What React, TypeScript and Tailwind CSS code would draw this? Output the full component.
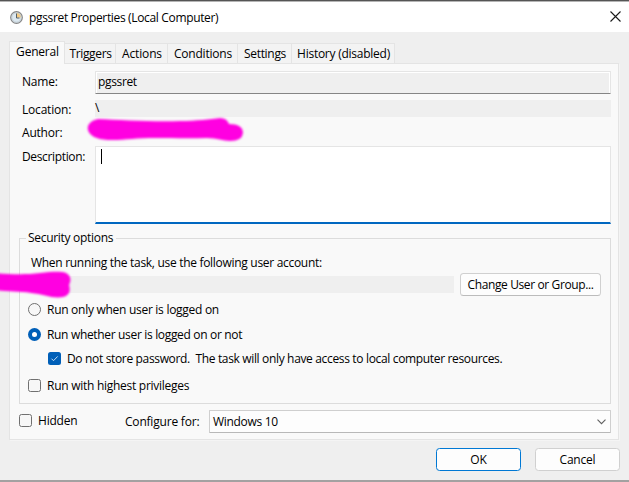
import type { ReactNode } from "react";

function Check({ checked = false }: { checked?: boolean }) {
  return checked ? (
    <span className="flex size-[13px] shrink-0 items-center justify-center rounded-[2.5px] bg-[#005fb8]">
      <svg width="13" height="13" viewBox="0 0 13 13" fill="none">
        <path d="M3.5 6.7L5.5 8.7L9.7 4.4" stroke="#d8e8f5" strokeWidth="0.9" />
      </svg>
    </span>
  ) : (
    <span className="size-[13px] shrink-0 rounded-[2.5px] border border-[#707070] bg-[#f7f7f7]" />
  );
}

function Radio({ checked = false }: { checked?: boolean }) {
  return checked ? (
    <span className="flex size-[13px] shrink-0 items-center justify-center rounded-full bg-[#005fb8]">
      <span className="size-[5px] rounded-full bg-white" />
    </span>
  ) : (
    <span className="size-[13px] shrink-0 rounded-full border border-[#707070] bg-[#f7f7f7]" />
  );
}

function Button({ children, className }: { children: ReactNode; className: string }) {
  return (
    <button className={`flex h-[23px] shrink-0 items-center justify-center rounded-[3.5px] border bg-[#fdfdfd] pt-px ${className}`}>
      {children}
    </button>
  );
}

const tabs = [
  { name: "Triggers", style: "w-[51px] tracking-[-0.35px]" },
  { name: "Actions", style: "w-[52px] tracking-[-0.15px]" },
  { name: "Conditions", style: "w-[70px] tracking-[-0.2px]" },
  { name: "Settings", style: "w-[54px] tracking-[-0.3px]" },
  { name: "History (disabled)", style: "w-[103px] tracking-[-0.25px]" },
];

export default function App() {
  return (
    <div className="relative flex h-[482px] w-[629px] flex-col overflow-hidden border-t border-b-2 border-t-[#555555] border-b-[#a3a1a1] bg-[#efefef] font-['Open_Sans','Noto_Sans',sans-serif] text-[12px] leading-4 tracking-[-0.2px] whitespace-pre text-black">
      <header className="flex h-[31px] shrink-0 items-center border-t border-[#b4b4b4] bg-white pl-[10px] pr-[8px]">
        <svg width="13" height="13" viewBox="0 0 13 13" fill="none">
          <circle cx="6.5" cy="6.5" r="5.8" fill="#dce8f0" stroke="#858585" strokeWidth="1.2" />
          <path d="M6.5 6.5V1.8A4.7 4.7 0 0 1 11.2 6.5Z" fill="#f5cb83" />
          <circle cx="6.5" cy="6.5" r="4.6" stroke="#b9c4cb" strokeWidth="0.6" />
          <path d="M6.5 2.5V7H9.5" stroke="#535e66" strokeWidth="1" />
        </svg>
        <span className="ml-[6px] pt-px tracking-[-0.34px]">pgssret Properties (Local Computer)</span>
        <svg className="mb-px ml-auto" width="11" height="11" viewBox="0 0 11 11" fill="none">
          <path d="M.5.5L10.5 10.5M10.5.5L.5 10.5" stroke="#191919" strokeWidth="1.1" />
        </svg>
      </header>

      <nav className="flex h-[31px] shrink-0 items-end pl-[9px]">
        <div className="z-10 -mb-px flex h-[23px] w-[56px] justify-center border border-b-0 border-[#e4e4e4] bg-[#f9f9f9] pl-px pt-[2px]">General</div>
        {tabs.map((tab) => (
          <div key={tab.name} className={`flex h-5 justify-center border-t border-r border-[#e4e4e4] bg-[#f3f3f3] pl-px pt-[2px] ${tab.style}`}>
            {tab.name}
          </div>
        ))}
      </nav>

      <main className="ml-[9px] flex h-[377px] w-[610px] shrink-0 flex-col border border-[#e4e4e4] bg-[#f9f9f9] pr-[7px] shadow-[1px_1px_0_#f4f4f4]">
        <div className="mt-[7px] flex h-[23px] items-start">
          <span className="w-[85px] pl-3 pt-[3px]">Name:</span>
          <div className="h-[23px] grow rounded-[1px] border border-[#e5e5e5] border-b-[#858585] bg-white p-px pb-0">
            <div className="h-5 bg-[#efefef] pl-px pt-px tracking-[-0.35px]">pgssret</div>
          </div>
        </div>
        <div className="mt-[6px] flex h-[17px]">
          <span className="w-[85px] pl-3 pt-[2px]">Location:</span>
          <div className="grow bg-[#efefef]">\</div>
        </div>
        <div className="mt-2 h-[15px] pl-3">Author:</div>
        <div className="mt-[6px] flex h-[78px]">
          <span className="w-[85px] pl-3 pt-[3px] tracking-[-0.35px]">Description:</span>
          <div className="grow border border-b-2 border-[#e5e5e5] border-b-[#0067c0] bg-white pl-[5px] pt-[2px]">
            <div className="h-[15px] w-px bg-black" />
          </div>
        </div>

        <section className="ml-[9px] mt-[14px] h-[166px] border border-[#dcdcdc]">
          <h2 className="-mt-[9px] ml-[6px] w-[90px] bg-[#f9f9f9] pl-[2px] tracking-[-0.3px]">Security options</h2>
          <p className="ml-[11px] mt-[9px] tracking-[-0.3px]">When running the task, use the following user account:</p>
          <div className="mt-[2px] flex h-[23px] items-center pl-[11px] pr-[9px]">
            <div className="h-[17px] grow bg-[#efefef]" />
            <Button className="ml-[6px] w-[141px] border-[#d0d0d0] border-b-[#bcbcbc] tracking-[-0.38px]">Change User or Group...</Button>
          </div>
          <div className="mt-[5px] flex h-4 items-center gap-[6px] pl-2">
            <Radio />
            <span className="pt-0.5 tracking-[-0.28px]">Run only when user is logged on</span>
          </div>
          <div className="mt-[9px] flex h-4 items-center gap-[6px] pl-2">
            <Radio checked />
            <span className="pt-0.5 tracking-[-0.33px]">Run whether user is logged on or not</span>
          </div>
          <div className="mt-2 flex h-4 items-center gap-[6px] pl-7">
            <Check checked />
            <span className="pt-0.5 tracking-[-0.34px]">{"Do not store password.  The task will only have access to local computer resources."}</span>
          </div>
          <div className="mt-[11px] flex h-4 items-center gap-[6px] pl-2">
            <Check />
            <span className="pt-0.5 tracking-[-0.27px]">Run with highest privileges</span>
          </div>
        </section>

        <div className="mt-[6px] flex h-[23px] items-center pl-[9px]">
          <span className="-mt-[2px] flex">
            <Check />
          </span>
          <span className="-mt-px ml-[6px] w-[87px]">Hidden</span>
          <span className="w-[84px] pt-px">Configure for:</span>
          <div className="flex h-[23px] grow items-center justify-between rounded-[1px] border border-[#cfcfcf] border-b-[#b8b8b8] bg-[#fdfdfd] pl-[3px] pr-1">
            <span className="pt-px tracking-[-0.3px]">Windows 10</span>
            <svg width="9" height="6" viewBox="0 0 9 6" fill="none">
              <path d="M.5.7L4.5 4.7L8.5.7" stroke="#606060" strokeWidth="1.1" />
            </svg>
          </div>
        </div>
      </main>

      <footer className="mt-2 flex justify-end gap-[14px] pr-[9px]">
        <Button className="w-[85px] border-[#0078d4]">OK</Button>
        <Button className="w-[85px] border-[#d0d0d0]">Cancel</Button>
      </footer>

      <svg className="pointer-events-none absolute -top-px left-0 z-20" width="629" height="482" fill="#ff00e1">
        <defs>
          <filter id="soft" x="-10%" y="-30%" width="120%" height="160%">
            <feGaussianBlur stdDeviation="0.9" />
          </filter>
        </defs>
        <path filter="url(#soft)" d="M98 119C120 120 155 122 180 121C197 121 210 119 220 118Q227 118 229 124C238 124 243 127 243 133Q242 141 230 141C223 141 217 138 207 138C178 139 150 137 132 139C119 140 104 141 97 138C85 134 84 122 98 119Z" />
        <path filter="url(#soft)" d="M-5 273C9 274 24 275 40 273C51 272 60 271 66 273Q73 277 69 285Q72 295 63 297C53 299 43 294 31 293C18 291 7 292 -5 290Z" />
      </svg>
    </div>
  );
}
